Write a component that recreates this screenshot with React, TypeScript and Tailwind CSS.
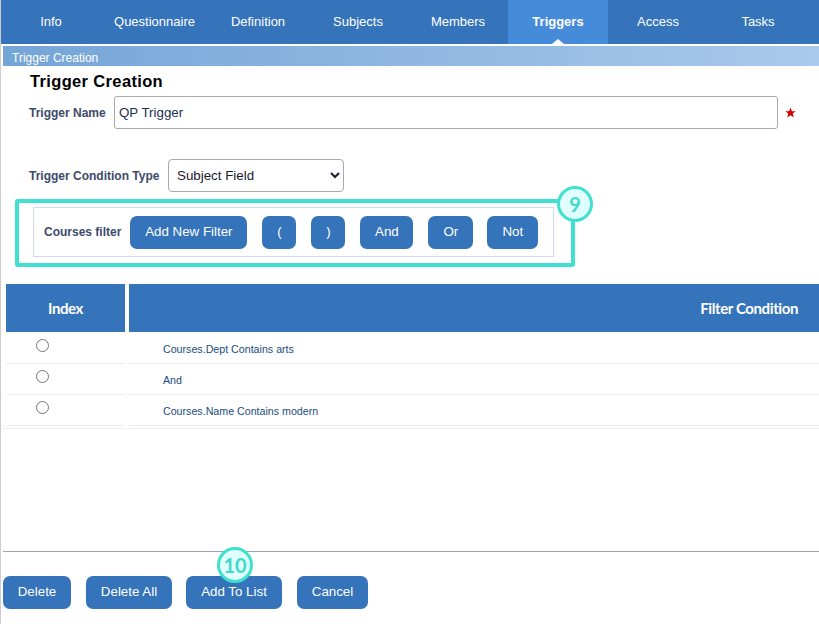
const tabs = [
  { label: "Info", w: "w-[100px]" },
  { label: "Questionnaire", w: "w-[107px]" },
  { label: "Definition", w: "w-[100px]" },
  { label: "Subjects", w: "w-[100px]" },
  { label: "Members", w: "w-[100px]" },
  { label: "Triggers", w: "w-[100px]", active: true },
  { label: "Access", w: "w-[100px]" },
  { label: "Tasks", w: "w-[100px]" },
];

const rows = ["Courses.Dept Contains arts", "And", "Courses.Name Contains modern"];

const Btn = ({ label, w }: { label: string; w: string }) => (
  <button className={`h-[33px] ${w} shrink-0 rounded-[7px] bg-[#3573ba] pb-[1px] text-center text-[13.33px] text-white`}>
    {label}
  </button>
);

const Badge = ({ n, className }: { n: string; className: string }) => (
  <div
    className={`absolute flex h-[36px] w-[36px] items-center justify-center rounded-full border-[3px] border-[#40e0d0] bg-[#e0ffff] font-['Lato',sans-serif] text-[20px] font-bold text-[#40d8c8] ${className}`}
  >
    {n}
  </div>
);

export default function App() {
  return (
    <div className="relative h-[624px] w-full overflow-hidden border-l border-[#cccccc] bg-white font-['Liberation_Sans',Arial,sans-serif]">
      {/* Tabs */}
      <nav className="flex h-[44px] bg-[#3573ba] text-[13px] text-white">
        {tabs.map((t) => (
          <div
            key={t.label}
            className={`relative flex h-full ${t.w} items-center justify-center pb-[1px] ${t.active ? "bg-[#468ada] font-bold" : ""}`}
          >
            {t.label}
            {t.active && (
              <span className="absolute bottom-0 left-[44px] h-0 w-0 border-x-[6px] border-b-[5px] border-x-transparent border-b-white" />
            )}
          </div>
        ))}
      </nav>

      {/* Section bar */}
      <div className="ml-[2px] mt-[2px] flex h-[20px] items-center bg-gradient-to-r from-[#74a5d7] to-[#aac9eb] pl-[9px] pt-[4px] text-[12px] text-white">
        Trigger Creation
      </div>

      <div className="pl-[28px]">
        <h1 className="pl-[1px] pt-[5px] text-[16.5px] font-bold leading-[20px] tracking-[0.35px] text-black">Trigger Creation</h1>

        <div className="mt-[5px] flex items-center">
          <label className="w-[85px] shrink-0 text-[12px] font-bold text-[#3d4a6b]">Trigger Name</label>
          <input
            readOnly
            value="QP Trigger"
            className="h-[33px] w-[664px] shrink-0 rounded-[3px] border border-[#aaaaaa] pl-[4px] text-[13.33px] text-[#1c2f4f]"
          />
          <svg className="ml-[7px] h-[11px] w-[11px] shrink-0" viewBox="0 0 24 24">
            <polygon fill="#d00000" points="12,1 15,9 23.5,9 16.8,14.3 19.3,23 12,18 4.7,23 7.2,14.3 0.5,9 9,9" />
          </svg>
        </div>

        <div className="mt-[30px] flex items-center">
          <label className="w-[139px] text-[12px] font-bold text-[#3d4a6b]">Trigger Condition Type</label>
          <select className="h-[33px] w-[176px] rounded-[4px] border border-[#aaaaaa] bg-white pl-[4px] text-[13.33px] text-[#1a1a2e]">
            <option>Subject Field</option>
          </select>
        </div>

        <div className="ml-[4px] mt-[15px] flex h-[50px] w-[521px] items-center border border-[#d0dcec] pl-[10px]">
          <span className="mr-[9px] text-[12px] font-bold text-[#3d4a6b]">Courses filter</span>
          <div className="flex gap-[15px]">
            <Btn label="Add New Filter" w="w-[117px]" />
            <Btn label="(" w="w-[34px]" />
            <Btn label=")" w="w-[34px]" />
            <Btn label="And" w="w-[53px]" />
            <Btn label="Or" w="w-[45px]" />
            <div className="-ml-[1px]"><Btn label="Not" w="w-[51px]" /></div>
          </div>
        </div>
      </div>

      {/* Conditions table */}
      <div className="ml-[5px] mt-[27px]">
        <div className="mb-[1px] flex h-[48px] gap-[4px] font-['Lato',sans-serif] text-[15px] font-bold tracking-[-0.4px] text-white">
          <div className="flex w-[119px] items-center justify-center bg-[#3573ba]">Index</div>
          <div className="flex flex-1 items-center justify-end bg-[#3573ba] pr-[21px]">Filter Condition</div>
        </div>
        {rows.map((r) => (
          <div key={r} className="flex h-[31px] gap-[4px]">
            <div className="w-[119px] border-b border-[#eeeeee] pl-[30px] pt-[6px]">
              <input type="radio" name="row" className="block h-[13px] w-[13px]" />
            </div>
            <div className="flex-1 border-b border-[#eeeeee] pl-[34px] pt-[9px] text-[10.67px] leading-[14px] text-[#1a4d80]">
              {r}
            </div>
          </div>
        ))}
      </div>
      <div className="ml-[2px] mt-[2px] border-b border-[#eeeeee]" />

      {/* Footer */}
      <div className="ml-[2px] mt-[122px] border-b border-[#9aa5bd]" />
      <div className="ml-[2px] mt-[24px] flex">
        <Btn label="Delete" w="w-[68px]" />
        <div className="ml-[15px]"><Btn label="Delete All" w="w-[86px]" /></div>
        <div className="ml-[14px]"><Btn label="Add To List" w="w-[96px]" /></div>
        <div className="ml-[15px]"><Btn label="Cancel" w="w-[71px]" /></div>
      </div>

      {/* Annotation overlays */}
      <div className="pointer-events-none absolute left-[14px] top-[199px] h-[68px] w-[560px] rounded-[3px] border-[4px] border-[#40e0d0]" />
      <Badge n="9" className="left-[556px] top-[186px]" />
      <Badge n="10" className="left-[216px] top-[547px]" />
    </div>
  );
}
